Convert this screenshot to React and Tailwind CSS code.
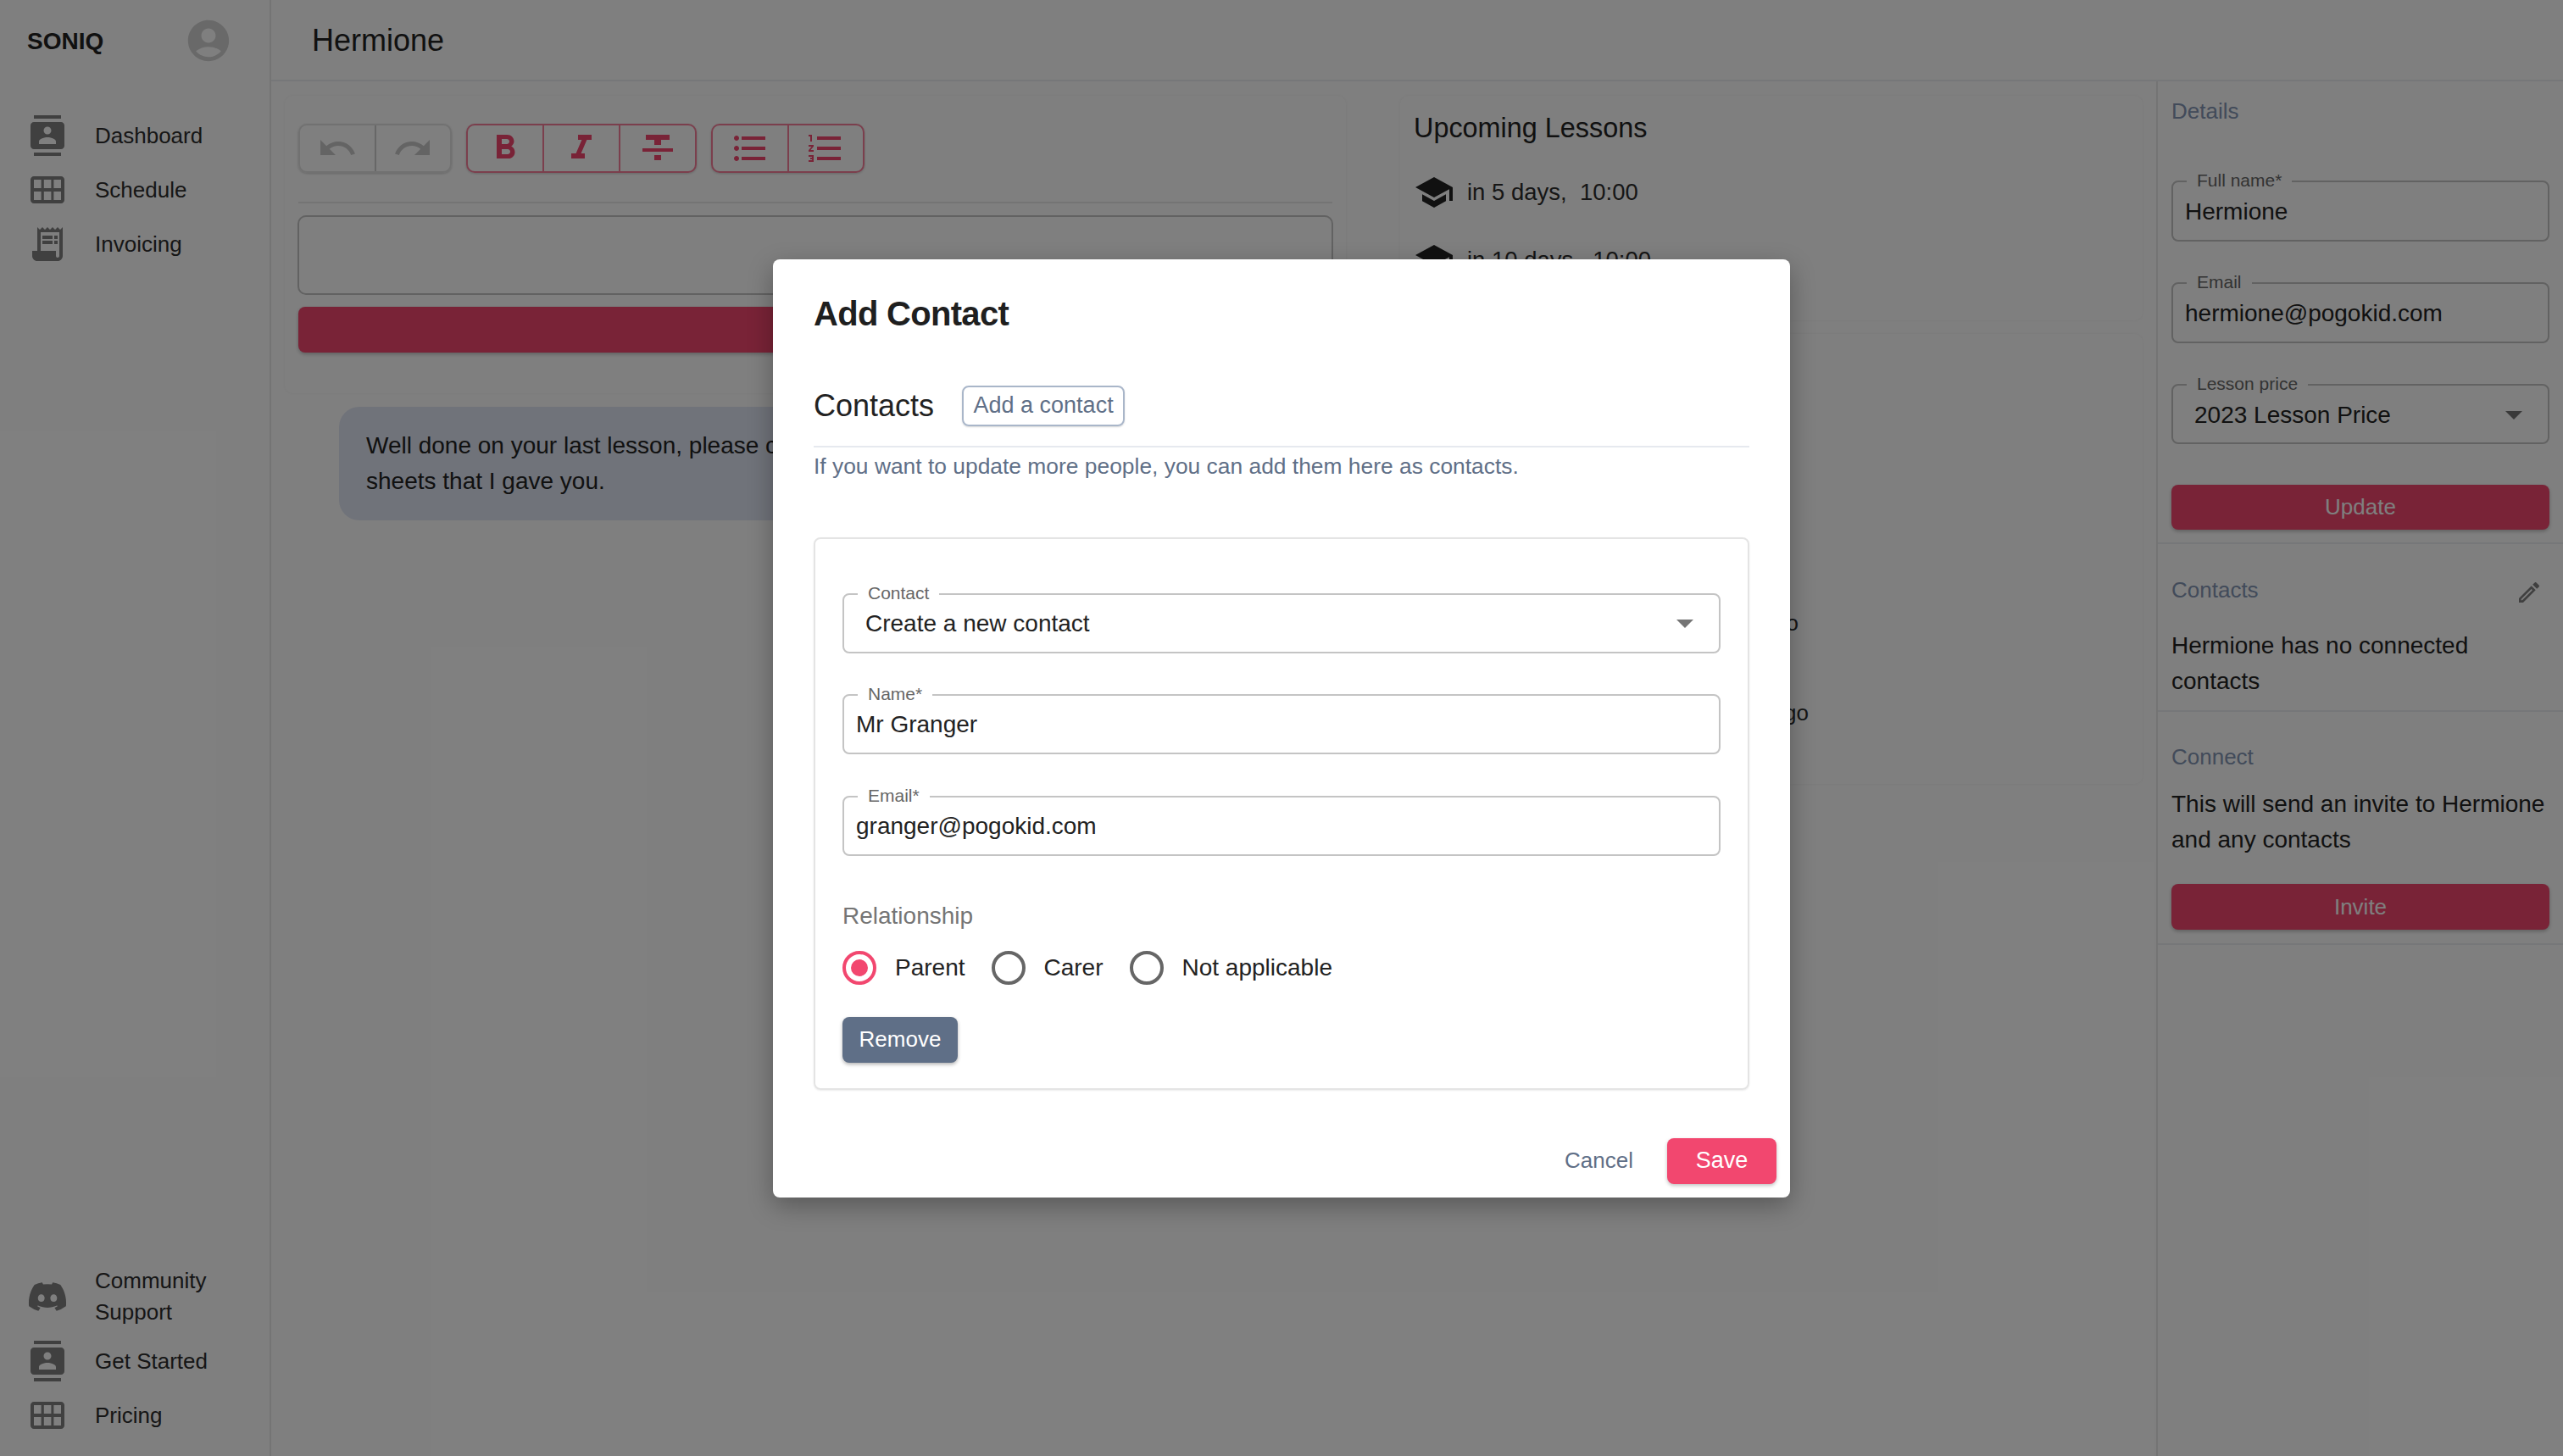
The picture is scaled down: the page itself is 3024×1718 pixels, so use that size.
import React from "react";
import { FaDiscord } from "react-icons/fa";

const font = "font-['Liberation_Sans',Arial,sans-serif]";

// material icon paths
const paths = {
  contacts:
    "M20 0H4v2h16V0zM4 24h16v-2H4v2zM20 4H4c-1.1 0-2 .9-2 2v12c0 1.1.9 2 2 2h16c1.1 0 2-.9 2-2V6c0-1.1-.9-2-2-2zm-8 2.75c1.24 0 2.25 1.01 2.25 2.25s-1.01 2.25-2.25 2.25S9.75 10.24 9.75 9 10.76 6.75 12 6.75zM17 17H7v-1.5c0-1.67 3.33-2.5 5-2.5s5 .83 5 2.5V17z",
  grid:
    "M4 4h16c1.1 0 2 .9 2 2v12c0 1.1-.9 2-2 2H4c-1.1 0-2-.9-2-2V6c0-1.1.9-2 2-2zm0 2v5h4.3V6H4zm5.9 0v5h4.3V6H9.9zm5.8 0v5H20V6h-4.3zM4 13v5h4.3v-5H4zm5.9 0v5h4.3v-5H9.9zm5.8 0v5H20v-5h-4.3z",
  receipt:
    "M19.5 3.5 18 2l-1.5 1.5L15 2l-1.5 1.5L12 2l-1.5 1.5L9 2 7.5 3.5 6 2v14H3v3c0 1.66 1.34 3 3 3h12c1.66 0 3-1.34 3-3V2l-1.5 1.5zM19 19c0 .55-.45 1-1 1s-1-.45-1-1v-3H8V5h11v14zM9 7h6v2H9zm7 0h2v2h-2zm-7 3h6v2H9zm7 0h2v2h-2z",
  account:
    "M12 2C6.48 2 2 6.48 2 12s4.48 10 10 10 10-4.48 10-10S17.52 2 12 2zm0 4c1.93 0 3.5 1.57 3.5 3.5S13.93 13 12 13s-3.5-1.57-3.5-3.5S10.07 6 12 6zm0 14c-2.03 0-4.43-.82-6.14-2.88C7.55 15.8 9.68 15 12 15s4.45.8 6.14 2.12C16.43 19.18 14.03 20 12 20z",
  undo: "M12.5 8c-2.65 0-5.05.99-6.9 2.6L2 7v9h9l-3.62-3.62c1.39-1.16 3.16-1.88 5.12-1.88 3.54 0 6.55 2.31 7.6 5.5l2.37-.78C21.08 11.03 17.15 8 12.5 8z",
  redo: "M18.4 10.6C16.55 8.99 14.15 8 11.5 8c-4.65 0-8.58 3.03-9.96 7.22L3.9 16c1.05-3.19 4.05-5.5 7.6-5.5 1.95 0 3.73.72 5.12 1.88L13 16h9V7l-3.6 3.6z",
  bold: "M15.6 10.79c.97-.67 1.65-1.77 1.65-2.79 0-2.26-1.75-4-4-4H7v14h7.04c2.09 0 3.71-1.7 3.71-3.79 0-1.52-.86-2.82-2.15-3.42zM10 6.5h3c.83 0 1.5.67 1.5 1.5s-.67 1.5-1.5 1.5h-3v-3zm3.5 9H10v-3h3.5c.83 0 1.5.67 1.5 1.5s-.67 1.5-1.5 1.5z",
  italic: "M10 4v3h2.21l-3.42 8H6v3h8v-3h-2.21l3.42-8H18V4z",
  strike: "M10 19h4v-3h-4v3zM5 4v3h5v3h4V7h5V4H5zM3 14h18v-2H3v2z",
  bullets:
    "M4 10.5c-.83 0-1.5.67-1.5 1.5s.67 1.5 1.5 1.5 1.5-.67 1.5-1.5-.67-1.5-1.5-1.5zm0-6c-.83 0-1.5.67-1.5 1.5S3.17 7.5 4 7.5 5.5 6.83 5.5 6 4.83 4.5 4 4.5zm0 12c-.83 0-1.5.68-1.5 1.5s.68 1.5 1.5 1.5 1.5-.68 1.5-1.5-.67-1.5-1.5-1.5zM7 19h14v-2H7v2zm0-6h14v-2H7v2zm0-8v2h14V5H7z",
  numbers:
    "M2 17h2v.5H3v1h1v.5H2v1h3v-4H2v1zm1-9h1V4H2v1h1v3zm-1 3h1.8L2 13.1v.9h3v-1H3.2L5 10.9V10H2v1zm5-6v2h14V5H7zm0 14h14v-2H7v2zm0-6h14v-2H7v2z",
  school: "M5 13.18v4L12 21l7-3.82v-4L12 17l-7-3.82zM12 3 1 9l11 6 9-4.91V17h2V9L12 3z",
  edit: "M3 17.25V21h3.75L17.81 9.94l-3.75-3.75L3 17.25zM5.92 19H5v-.92l9.06-9.06.92.92L5.92 19zM20.71 5.63l-2.34-2.34c-.2-.2-.45-.29-.71-.29s-.51.1-.7.29l-1.83 1.83 3.75 3.75 1.83-1.83c.39-.39.39-1.02 0-1.41z",
  arrow: "M7 10l5 5 5-5z",
};

function Icon({ name, className }) {
  return (
    <svg viewBox="0 0 24 24" fill="currentColor" fillRule="evenodd" className={className}>
      <path d={paths[name]} />
    </svg>
  );
}

function NavItem({ icon, children, className = "h-[64px]" }) {
  return (
    <div className={`flex items-center gap-[32px] pl-[32px] ${className}`}>
      {icon === "discord" ? (
        <FaDiscord className="w-[48px] h-[48px] text-[#808080] shrink-0" />
      ) : (
        <Icon name={icon} className="w-[48px] h-[48px] text-[#808080] shrink-0" />
      )}
      <span className="text-[26px] leading-[37px] text-[#2d2d2d]">{children}</span>
    </div>
  );
}

function ToolGroup({ items, disabled, width }) {
  return (
    <div
      className={`flex h-[58px] rounded-[10px] border-2 shadow-[0_1px_3px_rgba(0,0,0,0.2)] ${width} ${
        disabled ? "border-[#e2e2e2] text-[#c8c8c8]" : "border-[#f2476f]/70 text-[#f2476f]"
      }`}
    >
      {items.map((name, i) => (
        <div
          key={name}
          className={`flex-1 flex items-center justify-center ${
            i > 0 ? (disabled ? "border-l-2 border-[#cfcfcf]" : "border-l-2 border-[#f2476f]/70") : ""
          }`}
        >
          <Icon name={name} className="w-[48px] h-[48px]" />
        </div>
      ))}
    </div>
  );
}

function Field({ label, value, select, height = "h-[71px]", className = "" }) {
  return (
    <div
      className={`relative flex items-center justify-between border-2 border-[#c4c4c4] rounded-[8px] ${height} ${className}`}
    >
      <span className="absolute top-[-15px] left-[16px] bg-white px-[12px] text-[21px] leading-[26px] text-[#666666]">
        {label}
      </span>
      <span className={`text-[28px] text-[#222222] pt-[2px] ${select ? "pl-[25px]" : "pl-[14px]"}`}>{value}</span>
      {select && <Icon name="arrow" className="w-[48px] h-[48px] mr-[16px] text-[#757575]" />}
    </div>
  );
}

function Radio({ label, checked }) {
  return (
    <div className="flex items-center gap-[22px]">
      <div
        className={`w-[40px] h-[40px] rounded-full border-[4px] flex items-center justify-center ${
          checked ? "border-[#f2476f]" : "border-[#666666]"
        }`}
      >
        {checked && <div className="w-[20px] h-[20px] rounded-full bg-[#f2476f]" />}
      </div>
      <span className="text-[28px] text-[#222222]">{label}</span>
    </div>
  );
}

function WideButton({ children, className = "" }) {
  return (
    <div
      className={`flex items-center justify-center rounded-[8px] bg-[#f2476f] text-white text-[26px] shadow-[0_2px_4px_rgba(0,0,0,0.25)] ${className}`}
    >
      {children}
    </div>
  );
}

function Lesson({ children, className = "" }) {
  return (
    <div className={`flex items-center gap-[15px] h-[48px] text-[27.5px] text-[#2d2d2d] ${className}`}>
      <Icon name="school" className="w-[48px] h-[48px] text-[#222222] shrink-0" />
      <span className="whitespace-pre">{children}</span>
    </div>
  );
}

function AddContactDialog() {
  return (
    <div className="absolute inset-0 bg-black/50 flex items-center justify-center">
      <div className="w-[1200px] h-[1107px] bg-white rounded-[8px] shadow-[0_10px_30px_rgba(0,0,0,0.3)] flex flex-col pt-[38px] px-[48px]">
        <h2 className="text-[40px] leading-[52px] font-bold text-[#1f1f1f] tracking-[-0.7px]">Add Contact</h2>
        <div className="flex items-center gap-[33px] mt-[56px]">
          <span className="text-[36px] text-[#222222]">Contacts</span>
          <span className="h-[48px] w-[192px] flex items-center justify-center rounded-[8px] border-2 border-[#a9b6c9] text-[27px] text-[#5f6f87] shadow-[0_1px_2px_rgba(0,0,0,0.15)]">
            Add a contact
          </span>
        </div>
        <div className="h-[2px] bg-[#e6e9ef] mt-[20px] w-[1104px]" />
        <p className="text-[26.4px] leading-[44px] text-[#5f6f87]">
          If you want to update more people, you can add them here as contacts.
        </p>
        <div className="w-[1104px] h-[652px] mt-[62px] border-2 border-[#e4e4e4] rounded-[8px] shadow-[0_1px_2px_rgba(0,0,0,0.08)] pt-[64px] px-[32px]">
          <Field label="Contact" value="Create a new contact" select />
          <Field label="Name*" value="Mr Granger" className="mt-[48px]" />
          <Field label="Email*" value="granger@pogokid.com" className="mt-[49px]" />
          <div className="text-[28px] leading-[36px] text-[#757575] mt-[53px]">Relationship</div>
          <div className="flex items-center gap-[31px] mt-[22px]">
            <Radio label="Parent" checked />
            <Radio label="Carer" />
            <Radio label="Not applicable" />
          </div>
          <div className="mt-[37px] w-[136px] h-[54px] flex items-center justify-center rounded-[8px] bg-[#5f6f87] text-white text-[26px] shadow-[0_2px_4px_rgba(0,0,0,0.3)]">
            Remove
          </div>
        </div>
        <div className="flex items-center justify-end gap-[40px] mt-[57px] mr-[-32px]">
          <span className="text-[26px] text-[#5f6f87]">Cancel</span>
          <span className="w-[129px] h-[54px] flex items-center justify-center rounded-[8px] bg-[#f2476f] text-white text-[27px] shadow-[0_2px_4px_rgba(0,0,0,0.25)]">
            Save
          </span>
        </div>
      </div>
    </div>
  );
}

export default function App() {
  return (
    <div className={`relative h-screen w-full overflow-hidden bg-white flex ${font}`}>
      {/* Sidebar */}
      <aside className="w-[320px] shrink-0 border-r-2 border-[#e8e8e8] flex flex-col pb-[16px]">
        <div className="h-[96px] flex items-center justify-between pl-[32px] pr-[43px]">
          <span className="text-[28px] font-bold text-[#222222] pt-[2px]">SONIQ</span>
          <Icon name="account" className="w-[58px] h-[58px] text-[#d2d2d2]" />
        </div>
        <div className="mt-[32px]">
          <NavItem icon="contacts">Dashboard</NavItem>
          <NavItem icon="grid">Schedule</NavItem>
          <NavItem icon="receipt">Invoicing</NavItem>
        </div>
        <div className="mt-auto">
          <NavItem icon="discord" className="h-[92px] pt-[3px]">
            Community
            <br />
            Support
          </NavItem>
          <NavItem icon="contacts">Get Started</NavItem>
          <NavItem icon="grid">Pricing</NavItem>
        </div>
      </aside>

      <div className="flex-1 min-w-0 flex flex-col">
        <header className="h-[96px] shrink-0 border-b-2 border-[#edeef3] flex items-center pl-[48px]">
          <h1 className="text-[36px] text-[#222222] pt-[2px]">Hermione</h1>
        </header>

        <div className="flex-1 flex min-h-0">
          {/* Main column */}
          <main className="flex-1 min-w-0 flex gap-[64px] pl-[16px] pr-[16px] pt-[17px]">
            <div className="w-[1252px] shrink-0">
              <section className="h-[351px] rounded-[10px] bg-white shadow-[0_0_4px_rgba(0,0,0,0.06)] pt-[33px] px-[16px]">
                <div className="flex gap-[17px]">
                  <ToolGroup items={["undo", "redo"]} width="w-[181px]" disabled />
                  <ToolGroup items={["bold", "italic", "strike"]} width="w-[272px]" />
                  <ToolGroup items={["bullets", "numbers"]} width="w-[181px]" />
                </div>
                <div className="h-[2px] bg-[#e8e8e8] mt-[34px]" />
                <div className="h-[94px] mt-[14px] mx-[-1px] rounded-[10px] border-2 border-[#c4c4c4]" />
                <WideButton className="h-[54px] mt-[14px] mr-[-1px]" />
              </section>
              <div className="ml-[64px] mt-[16px] w-[1100px] h-[134px] rounded-[24px] bg-[#e1e6f4] px-[32px] py-[25px] text-[28px] leading-[42px] text-[#222222]">
                Well done on your last lesson, please complete the
                <br />
                sheets that I gave you.
              </div>
            </div>

            <div className="flex-1 min-w-0">
              <section className="h-[265px] rounded-[10px] bg-white shadow-[0_0_4px_rgba(0,0,0,0.06)] pl-[16px] pt-[18px] overflow-hidden">
                <h3 className="text-[32.4px] leading-[40px] text-[#222222]">Upcoming Lessons</h3>
                <Lesson className="mt-[32px]">in 5 days,  10:00</Lesson>
                <Lesson className="mt-[32px]">in 10 days,  10:00</Lesson>
              </section>
              <section className="h-[531px] mt-[16px] rounded-[10px] bg-white shadow-[0_0_4px_rgba(0,0,0,0.06)] pl-[16px] pt-[323px]">
                <p className="w-[454px] text-right text-[26px] leading-[36px] text-[#2d2d2d]">5 days ago</p>
                <p className="w-[466px] text-right text-[26px] leading-[36px] text-[#2d2d2d] mt-[70px]">12 days ago</p>
              </section>
            </div>
          </main>

          {/* Right panel */}
          <aside className="w-[480px] shrink-0 border-l-2 border-[#e8e8e8]">
            <section className="h-[546px] border-b-2 border-[#edeef3] px-[16px] pt-[20px]">
              <h4 className="text-[26px] leading-[30px] text-[#8496b4]">Details</h4>
              <Field label="Full name*" value="Hermione" height="h-[72px]" className="mt-[67px]" />
              <Field label="Email" value="hermione@pogokid.com" height="h-[72px]" className="mt-[48px]" />
              <Field label="Lesson price" value="2023 Lesson Price" select height="h-[71px]" className="mt-[48px]" />
              <WideButton className="h-[53px] mt-[48px]">Update</WideButton>
            </section>
            <section className="h-[198px] border-b-2 border-[#edeef3] px-[16px] pt-[39px]">
              <div className="flex items-center justify-between h-[30px]">
                <h4 className="text-[26px] text-[#8496b4]">Contacts</h4>
                <Icon name="edit" className="w-[32px] h-[32px] mr-[8px] mt-[6px] text-[#808080]" />
              </div>
              <p className="text-[28px] leading-[42px] text-[#222222] mt-[30px]">
                Hermione has no connected contacts
              </p>
            </section>
            <section className="h-[275px] border-b-2 border-[#edeef3] px-[16px] pt-[38px]">
              <h4 className="text-[26px] leading-[30px] text-[#8496b4]">Connect</h4>
              <p className="text-[28px] leading-[42px] text-[#222222] mt-[20px]">
                This will send an invite to Hermione and any contacts
              </p>
              <WideButton className="h-[54px] mt-[31px]">Invite</WideButton>
            </section>
          </aside>
        </div>
      </div>

      <AddContactDialog />
    </div>
  );
}
